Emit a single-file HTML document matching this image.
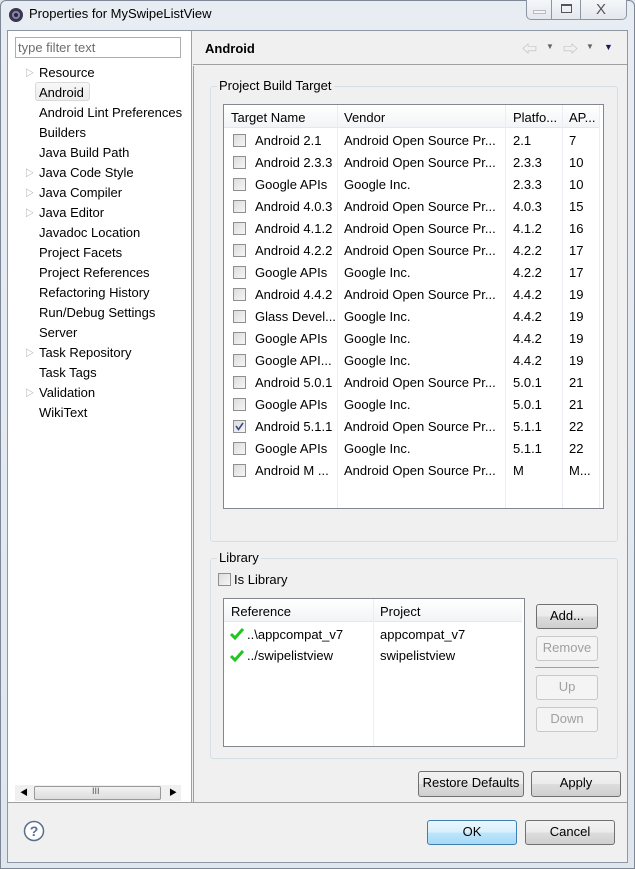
<!DOCTYPE html>
<html><head><style>
*{box-sizing:border-box;margin:0;padding:0}
body{width:635px;height:869px;background:#dfe6ee;font-family:"Liberation Sans","Noto Sans CJK SC",sans-serif;font-size:13px;color:#000;position:relative;overflow:hidden}
.abs{position:absolute}
.win{position:absolute;left:0;top:0;width:635px;height:869px;background:linear-gradient(#e8edf3,#dfe6ee);border:1px solid #7d8795;border-radius:6px 6px 0 0}
.client{position:absolute;left:7px;top:30px;width:621px;height:833px;background:#f0f0f0;border:1px solid #8e98a4}
.t{position:absolute;white-space:nowrap}
.btn{position:absolute;border:1px solid #707070;border-radius:3px;background:linear-gradient(#f2f2f2 0%,#ebebeb 50%,#dddddd 51%,#cfcfcf 100%);text-align:center;line-height:22px}
.dis{border-color:#c8c8c8;background:#f4f4f4;color:#a0a0a0}
.cb{position:absolute;width:13px;height:13px;border:1px solid #8f8f8f;background:linear-gradient(135deg,#dcdcdc,#f6f6f6)}
.grp{position:absolute;border:1px solid #d5dfe5;border-radius:3px}
.lbl{position:absolute;background:#f0f0f0;padding:0 2px}
</style></head><body>
<div class="win"></div>
<svg class="abs" style="left:8px;top:7px" width="16" height="16"><circle cx="8" cy="8" r="7" fill="#3a3550"/><circle cx="8" cy="8" r="4" fill="#8a86a8"/><circle cx="8" cy="8" r="2" fill="#2a2540"/></svg>
<div class="t" style="left:29px;top:6px;font-size:13px">Properties for MySwipeListView</div>
<div class="abs" style="left:526px;top:0;width:101px;height:20px;border:1px solid #8d96a3;border-top:none;border-radius:0 0 5px 5px;background:linear-gradient(#f4f6f9,#e3e8ee)"></div>
<div class="abs" style="left:551px;top:0;width:1px;height:20px;background:#8d96a3"></div>
<div class="abs" style="left:580px;top:0;width:1px;height:20px;background:#8d96a3"></div>
<div class="abs" style="left:533px;top:10px;width:13px;height:4px;border:1px solid #bbb;background:#f4f4f4"></div>
<div class="abs" style="left:561px;top:4px;width:11px;height:9px;border:1px solid #555;border-top-width:2px"></div>
<div class="t" style="left:596px;top:1px;font-size:15px;color:#555">X</div>

<div class="client"></div>
<div class="abs" style="left:8px;top:31px;width:184px;height:771px;background:#fff;border-right:1px solid #a0a0a0"></div>
<div class="abs" style="left:15px;top:37px;width:166px;height:21px;border:1px solid #abadb3;background:#fff"></div>
<div class="t" style="left:18px;top:40px;color:#6d6d6d">type filter text</div>
<div class="abs" style="left:35px;top:82px;width:55px;height:19px;border:1px solid #d9d9d9;border-radius:3px;background:linear-gradient(#f8f8f8,#ececec)"></div>
<div style="position:absolute;left:39px;top:63px;line-height:20px">
Resource<br>Android<br>Android Lint Preferences<br>Builders<br>Java Build Path<br>Java Code Style<br>Java Compiler<br>Java Editor<br>Javadoc Location<br>Project Facets<br>Project References<br>Refactoring History<br>Run/Debug Settings<br>Server<br>Task Repository<br>Task Tags<br>Validation<br>WikiText</div>
<div class="t" style="left:25px;top:63px;line-height:20px;color:#999;font-size:9px">▷<br><br><br><br><br>▷<br>▷<br>▷<br><br><br><br><br><br><br>▷<br><br>▷</div>
<div class="abs" style="left:15px;top:785px;width:166px;height:16px;background:#f0f0f0"></div>
<div class="abs" style="left:34px;top:786px;width:127px;height:14px;border:1px solid #999;border-radius:2px;background:linear-gradient(#f3f3f3,#dcdcdc)"></div>
<div class="t" style="left:92px;top:786px;font-size:9px;color:#555">III</div>
<div class="t" style="left:20px;top:787px;font-size:8px">◀</div>
<div class="t" style="left:169px;top:787px;font-size:8px">▶</div>

<div class="abs" style="left:193px;top:64px;width:434px;height:1px;background:#a0a0a0"></div>
<div class="t" style="left:205px;top:41px;font-weight:bold;font-size:13px">Android</div>
<div class="t" style="left:522px;top:38px;color:#bbb;font-size:15px">⇦</div>
<div class="t" style="left:546px;top:42px;color:#666;font-size:8px">▼</div>
<div class="t" style="left:563px;top:38px;color:#bbb;font-size:15px">⇨</div>
<div class="t" style="left:586px;top:42px;color:#666;font-size:8px">▼</div>
<div class="t" style="left:604px;top:42px;color:#2a1060;font-size:9px">▼</div>

<div class="grp" style="left:210px;top:86px;width:408px;height:456px"></div>
<div class="lbl" style="left:217px;top:78px">Project Build Target</div>
<div class="abs" style="left:223px;top:104px;width:381px;height:405px;border:1px solid #828790;background:#fff"></div>
<div class="abs" style="left:224px;top:105px;width:376px;height:23px;background:linear-gradient(#fff,#f3f4f6);border-bottom:1px solid #e4e8ee"></div>
<div class="abs" style="left:337px;top:105px;width:1px;height:403px;background:#eaeef4"></div>
<div class="abs" style="left:505px;top:105px;width:1px;height:403px;background:#eaeef4"></div>
<div class="abs" style="left:562px;top:105px;width:1px;height:403px;background:#eaeef4"></div>
<div class="abs" style="left:599px;top:105px;width:1px;height:403px;background:#eaeef4"></div>
<div class="t" style="left:231px;top:110px">Target Name</div>
<div class="t" style="left:344px;top:110px">Vendor</div>
<div class="t" style="left:513px;top:110px">Platfo...</div>
<div class="t" style="left:569px;top:110px">AP...</div>
<div style="position:absolute;left:255px;top:130px;line-height:22px">Android 2.1<br>Android 2.3.3<br>Google APIs<br>Android 4.0.3<br>Android 4.1.2<br>Android 4.2.2<br>Google APIs<br>Android 4.4.2<br>Glass Devel...<br>Google APIs<br>Google API...<br>Android 5.0.1<br>Google APIs<br>Android 5.1.1<br>Google APIs<br>Android M ...</div>
<div style="position:absolute;left:344px;top:130px;line-height:22px">Android Open Source Pr...<br>Android Open Source Pr...<br>Google Inc.<br>Android Open Source Pr...<br>Android Open Source Pr...<br>Android Open Source Pr...<br>Google Inc.<br>Android Open Source Pr...<br>Google Inc.<br>Google Inc.<br>Google Inc.<br>Android Open Source Pr...<br>Google Inc.<br>Android Open Source Pr...<br>Google Inc.<br>Android Open Source Pr...</div>
<div style="position:absolute;left:513px;top:130px;line-height:22px">2.1<br>2.3.3<br>2.3.3<br>4.0.3<br>4.1.2<br>4.2.2<br>4.2.2<br>4.4.2<br>4.4.2<br>4.4.2<br>4.4.2<br>5.0.1<br>5.0.1<br>5.1.1<br>5.1.1<br>M</div>
<div style="position:absolute;left:569px;top:130px;line-height:22px">7<br>10<br>10<br>15<br>16<br>17<br>17<br>19<br>19<br>19<br>19<br>21<br>21<br>22<br>22<br>M...</div>
<div class="cb" style="left:233px;top:134px"></div>
<div class="cb" style="left:233px;top:156px"></div>
<div class="cb" style="left:233px;top:178px"></div>
<div class="cb" style="left:233px;top:200px"></div>
<div class="cb" style="left:233px;top:222px"></div>
<div class="cb" style="left:233px;top:244px"></div>
<div class="cb" style="left:233px;top:266px"></div>
<div class="cb" style="left:233px;top:288px"></div>
<div class="cb" style="left:233px;top:310px"></div>
<div class="cb" style="left:233px;top:332px"></div>
<div class="cb" style="left:233px;top:354px"></div>
<div class="cb" style="left:233px;top:376px"></div>
<div class="cb" style="left:233px;top:398px"></div>
<div class="cb" style="left:233px;top:420px"></div>
<div class="cb" style="left:233px;top:442px"></div>
<div class="cb" style="left:233px;top:464px"></div>
<svg class="abs" style="left:234px;top:421px" width="11" height="11"><path d="M2 5 L4.5 8.5 L9 2" stroke="#3a4a8a" stroke-width="1.6" fill="none"/></svg>

<div class="grp" style="left:210px;top:558px;width:408px;height:201px"></div>
<div class="lbl" style="left:217px;top:550px">Library</div>
<div class="cb" style="left:218px;top:573px"></div>
<div class="t" style="left:234px;top:572px">Is Library</div>
<div class="abs" style="left:223px;top:598px;width:302px;height:149px;border:1px solid #828790;background:#fff"></div>
<div class="abs" style="left:224px;top:599px;width:298px;height:23px;background:linear-gradient(#fff,#f3f4f6);border-bottom:1px solid #e4e8ee"></div>
<div class="abs" style="left:373px;top:599px;width:1px;height:147px;background:#eaeef4"></div>
<div class="t" style="left:231px;top:604px">Reference</div>
<div class="t" style="left:380px;top:604px">Project</div>
<svg class="abs" style="left:230px;top:628px" width="14" height="12"><path d="M1 6 L5 10 L13 1" stroke="#1ec81e" stroke-width="3" fill="none"/></svg>
<svg class="abs" style="left:230px;top:650px" width="14" height="12"><path d="M1 6 L5 10 L13 1" stroke="#1ec81e" stroke-width="3" fill="none"/></svg>
<div class="t" style="left:247px;top:627px">..\appcompat_v7</div>
<div class="t" style="left:247px;top:648px">../swipelistview</div>
<div class="t" style="left:380px;top:627px">appcompat_v7</div>
<div class="t" style="left:380px;top:648px">swipelistview</div>
<div class="btn" style="left:536px;top:604px;width:62px;height:25px">Add...</div>
<div class="btn dis" style="left:536px;top:636px;width:62px;height:25px">Remove</div>
<div class="abs" style="left:535px;top:667px;width:64px;height:1px;background:#a0a0a0"></div>
<div class="btn dis" style="left:536px;top:675px;width:62px;height:25px">Up</div>
<div class="btn dis" style="left:536px;top:707px;width:62px;height:25px">Down</div>

<div class="btn" style="left:418px;top:771px;width:106px;height:26px">Restore Defaults</div>
<div class="btn" style="left:531px;top:771px;width:90px;height:26px">Apply</div>
<div class="abs" style="left:8px;top:802px;width:619px;height:1px;background:#a0a0a0"></div>
<div class="abs" style="left:193px;top:66px;width:1px;height:736px;background:#a0a0a0"></div>

<svg class="abs" style="left:23px;top:820px" width="22" height="22"><circle cx="11" cy="11" r="9.5" fill="#fff" stroke="#5a6f90" stroke-width="1.5"/><text x="11" y="16" text-anchor="middle" font-family="Liberation Sans" font-weight="bold" font-size="14" fill="#5a6f90">?</text></svg>
<div class="btn" style="left:427px;top:820px;width:90px;height:25px;border-color:#3c7fb1;background:linear-gradient(#eaf6fd,#d9f0fc 50%,#bee6fd 51%,#a7d9f5)">OK</div>
<div class="btn" style="left:525px;top:820px;width:90px;height:25px">Cancel</div>
</body></html>
